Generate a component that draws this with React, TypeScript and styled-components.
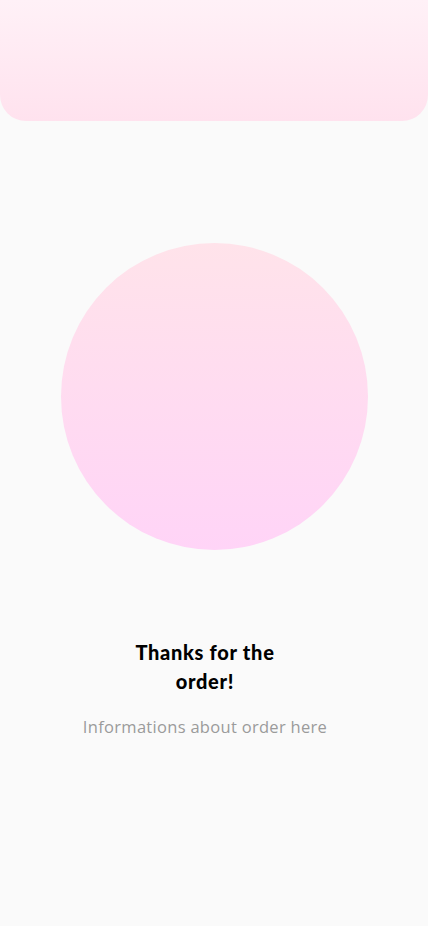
import React from "react";
import styled, { createGlobalStyle } from "styled-components";

const Global = createGlobalStyle`
  html, body { margin: 0; padding: 0; background: #fafafa; }
  #root { min-height: 926px; }
`;

const Page = styled.div`
  width: 428px;
  min-height: 926px;
  background: #fafafa;
  display: flex;
  flex-direction: column;
  align-items: center;
`;

const Header = styled.div`
  width: 100%;
  height: 121px;
  border-radius: 0 0 26px 26px;
  background: linear-gradient(180deg, #fff1f7 0%, #ffe2ee 100%);
`;

const Circle = styled.div`
  margin-top: 122px;
  width: 307px;
  height: 307px;
  border-radius: 50%;
  background: linear-gradient(180deg, #ffe3ea 0%, #ffd4f7 100%);
`;

const TextBlock = styled.div`
  margin-top: 88px;
  margin-right: 18px;
  display: flex;
  flex-direction: column;
  align-items: center;
`;

const Title = styled.h1`
  margin: 0;
  width: 150px;
  text-align: center;
  font-family: "Lato", "Noto Sans", sans-serif;
  font-weight: 900;
  font-size: 20px;
  line-height: 29px;
  color: #000;
  letter-spacing: 0.7px;
`;

const Subtitle = styled.p`
  margin: 19px 0 0;
  font-family: "Open Sans", "Noto Sans", sans-serif;
  font-weight: 400;
  font-size: 16.5px;
  line-height: 24px;
  color: #9b9b9b;
  text-align: center;
  letter-spacing: 0.3px;
`;

export default function App() {
  return (
    <>
      <Global />
      <Page>
        <Header />
        <Circle />
        <TextBlock>
          <Title>Thanks for the order!</Title>
          <Subtitle>Informations about order here</Subtitle>
        </TextBlock>
      </Page>
    </>
  );
}
